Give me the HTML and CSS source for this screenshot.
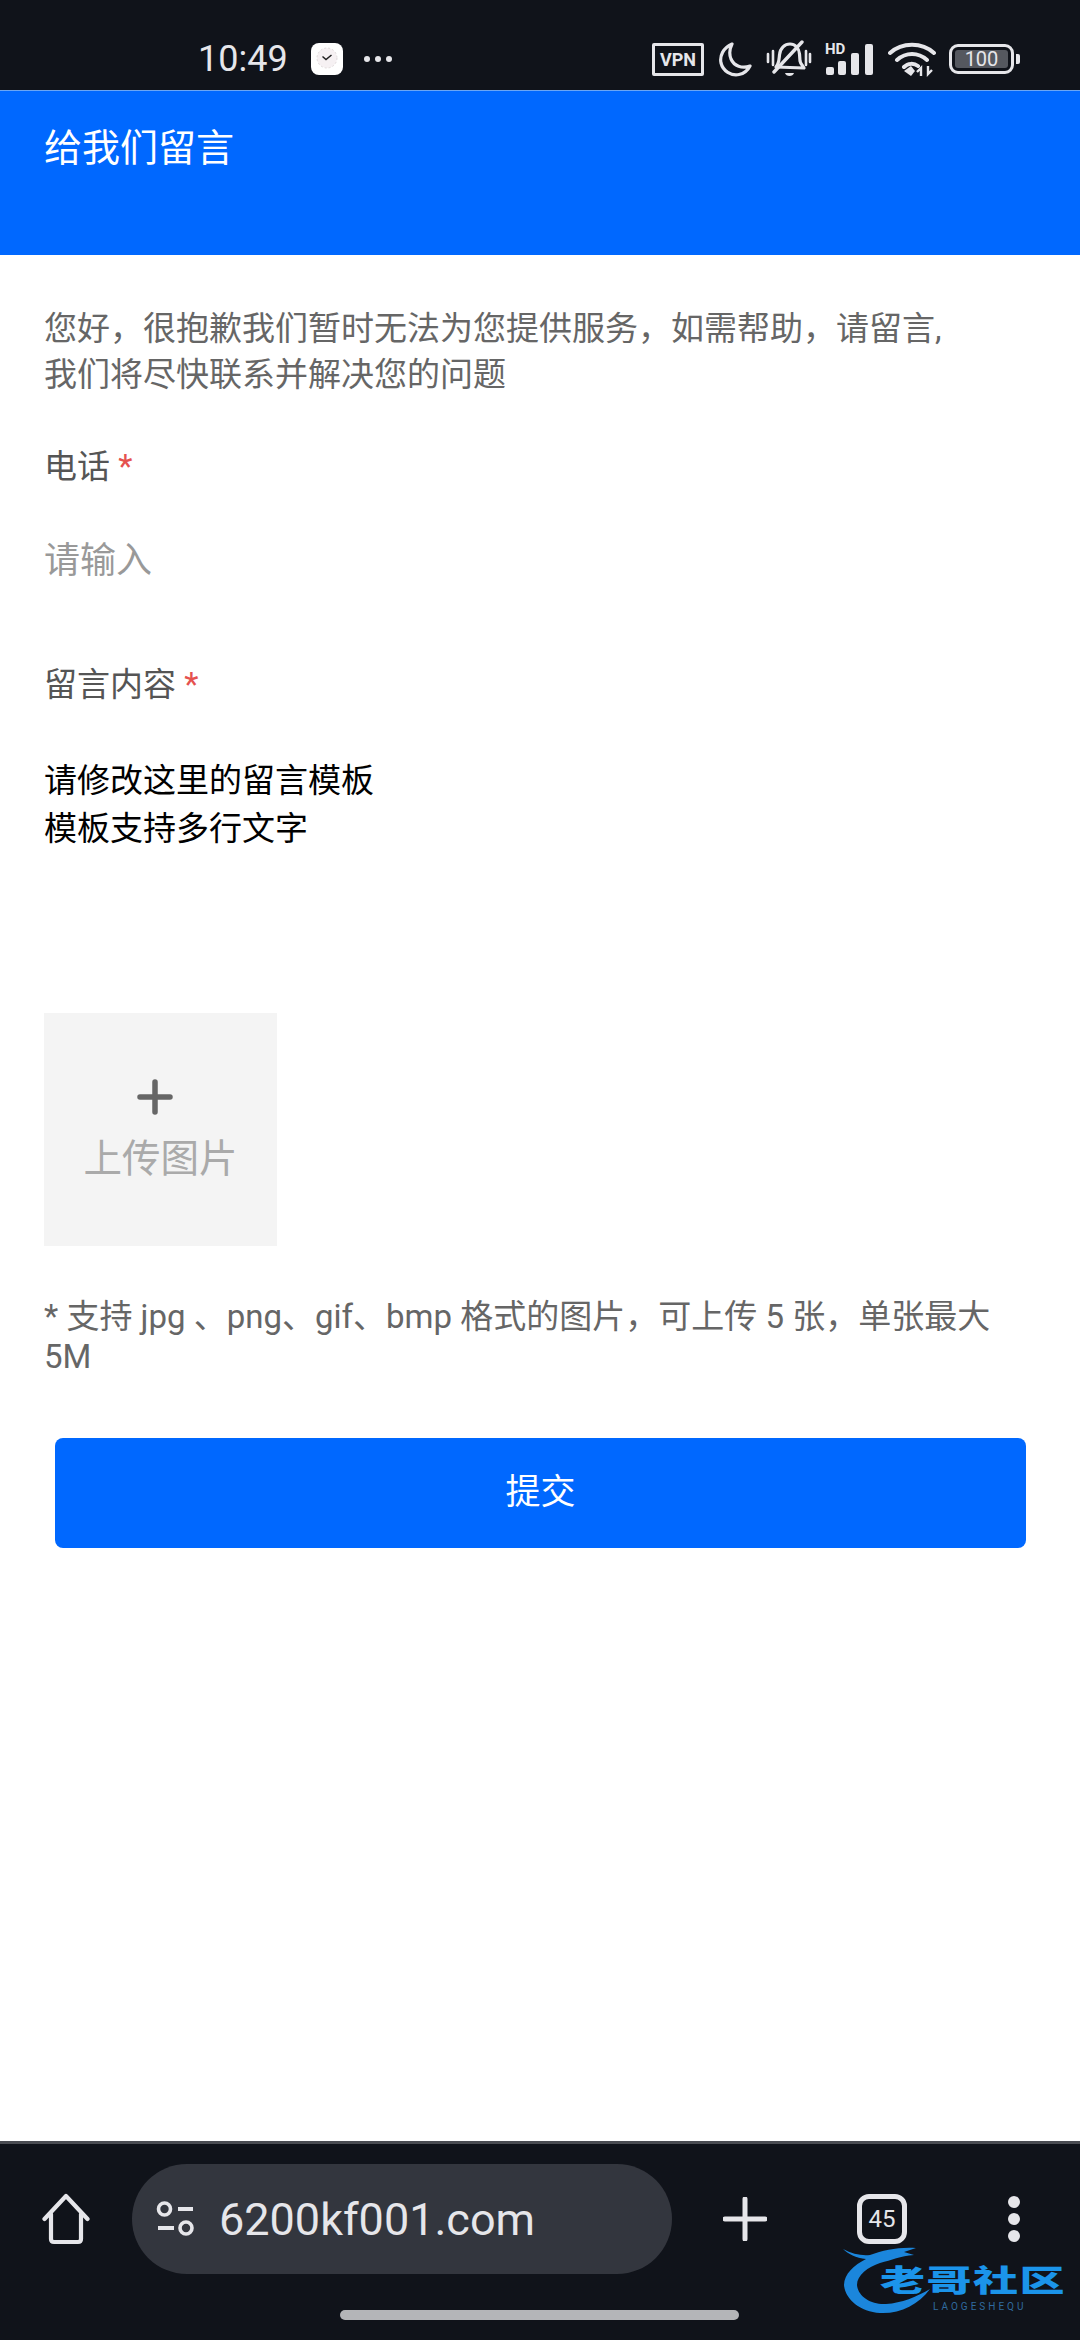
FILE: index.html
```html
<!DOCTYPE html>
<html lang="zh-CN">

<head>
    <meta charset="UTF-8">
    <title>给我们留言</title>
    <link rel="stylesheet" href="styles.css">
</head>

<body>
    <div class="phone">
        <!-- status bar -->
        <div class="status-bar">
            <div class="status-left">
                <span class="time">10:49</span>
                <svg class="clock-app" width="32" height="32" viewBox="0 0 32 32">
                    <rect width="32" height="32" rx="8" fill="#fff" />
                    <circle cx="16" cy="15" r="10" fill="#f6f1f3" stroke="#d8d0d2" stroke-width="0.8" stroke-dasharray="2 2" />
                    <path d="M11.5 13.5 L15 16.5 L20.5 12" fill="none" stroke="#222" stroke-width="1.5" />
                </svg>
                <svg class="more-dots" width="30" height="8" viewBox="0 0 30 8">
                    <circle cx="4" cy="4" r="3" fill="#e6e6ea" />
                    <circle cx="15" cy="4" r="3" fill="#e6e6ea" />
                    <circle cx="26" cy="4" r="3" fill="#e6e6ea" />
                </svg>
            </div>
            <div class="status-right">
                <span class="vpn">VPN</span>
                <svg width="36" height="36" viewBox="0 0 36 36">
                    <path d="M15 3 C6 7 2.500 15 4 22 C6 30 14 35 22 33.500 C27 32.500 31 29 33 25 C25 28 17 25 14 18 C12 13 12.500 8 15 3 Z" fill="none" stroke="#e6e6ea" stroke-width="3.200" stroke-linejoin="round" />
                </svg>
                <svg width="46" height="38" viewBox="0 0 46 38">
                    <path d="M10 27 C13 24 13 20 13.500 15 C14 8 19 4 24 4 C29 4 33 8 33.500 14 L34 21 C34.500 24 37 26 38 28 Z" fill="none" stroke="#e6e6ea" stroke-width="3.200" stroke-linejoin="round" />
                    <path d="M19 33 H28 C27 37 20 37 19 33 Z" fill="#e6e6ea" />
                    <path d="M8 32 L36 2" stroke="#e6e6ea" stroke-width="3.400" stroke-linecap="round" />
                    <path d="M2 14 V22 M7 11 V25 M40 11 V25 M44 14 V22" stroke="#e6e6ea" stroke-width="2.600" stroke-linecap="round" />
                </svg>
                <div class="signal">
                    <span class="hd">HD</span>
                    <svg width="50" height="32" viewBox="0 0 50 32">
                        <rect x="1" y="24" width="8" height="8" rx="2" fill="#e6e6ea" />
                        <rect x="13" y="18" width="8" height="14" rx="2" fill="#e6e6ea" />
                        <rect x="26" y="10" width="8" height="22" rx="2" fill="#e6e6ea" />
                        <rect x="40" y="1" width="8" height="31" rx="2" fill="#e6e6ea" />
                    </svg>
                </div>
                <svg width="48" height="36" viewBox="0 0 48 36">
                    <path d="M2 12 C14 1 34 1 46 12 M9 19 C18 11 30 11 39 19 M16 26 C20 22 26 22 30 25" fill="none" stroke="#e6e6ea" stroke-width="4" stroke-linecap="round" />
                    <path d="M16 30 L23 25 L27 30 L23 35 Z" fill="#e6e6ea" />
                    <path d="M33 35 V27 L29 31 M40 25 V33 L44 29" fill="none" stroke="#e6e6ea" stroke-width="2.400" />
                </svg>
                <div class="battery">
                    <div class="battery-body"><span class="battery-level">100</span></div>
                    <span class="battery-tip"></span>
                </div>
            </div>
        </div>

        <!-- page header -->
        <div class="page-header">给我们留言</div>

        <!-- form -->
        <div class="content">
            <p class="intro">您好，很抱歉我们暂时无法为您提供服务，如需帮助，请留言,<br>我们将尽快联系并解决您的问题</p>

            <div class="label">电话 <span class="required">*</span></div>
            <div class="input-field">请输入</div>

            <div class="label">留言内容 <span class="required">*</span></div>
            <div class="textarea-field">请修改这里的留言模板<br>模板支持多行文字</div>

            <div class="upload-box">
                <svg class="upload-plus" width="36" height="36" viewBox="0 0 36 36">
                    <path d="M18 3 V33 M3 18 H33" stroke="#666" stroke-width="5.500" stroke-linecap="round" />
                </svg>
                <span class="upload-text">上传图片</span>
            </div>

            <p class="note">* 支持 jpg 、png、gif、bmp 格式的图片，可上传 5 张，单张最大 5M</p>

            <div class="submit-btn">提交</div>
        </div>

        <!-- browser toolbar -->
        <div class="toolbar">
            <div class="toolbar-row">
                <svg class="home-icon" width="48" height="52" viewBox="0 0 48 52">
                    <path d="M2.500 26 L24 3 L45.500 26 M9 21 V46 C9 48 10 49 12 49 H36 C38 49 39 48 39 46 V21" fill="none" stroke="#e6e6ea" stroke-width="4.200" stroke-linecap="round" stroke-linejoin="round" />
                </svg>
                <div class="url-pill">
                    <svg width="40" height="36" viewBox="0 0 40 36">
                        <circle cx="8.500" cy="8" r="6" fill="none" stroke="#e6e6ea" stroke-width="3.600" />
                        <path d="M22 8 H37 M2 27 H18" stroke="#e6e6ea" stroke-width="3.800" />
                        <circle cx="30" cy="27" r="6" fill="none" stroke="#e6e6ea" stroke-width="3.600" />
                    </svg>
                    <span class="url">6200kf001.com</span>
                </div>
                <svg class="plus-icon" width="44" height="44" viewBox="0 0 44 44">
                    <path d="M22 2 V42 M2 22 H42" stroke="#e6e6ea" stroke-width="5" stroke-linecap="round" />
                </svg>
                <div class="tab-count">45</div>
                <div class="menu-dots"><span></span><span></span><span></span></div>
            </div>
            <div class="home-indicator"></div>

            <!-- watermark -->
            <div class="watermark">
                <svg class="dragon" width="90" height="68" viewBox="0 0 90 68">
                    <path d="M1 2 C10 7 20 9 28 8 C42 3 56 0 74 1 L62 5 L72 8 C58 9 50 13 38 16 C26 20 15 28 15 38 C16 50 30 58 44 57 C60 56 74 50 88 42 C76 58 58 67 38 66 C18 65 3 52 2 38 C2 27 12 18 24 12 C14 11 6 7 1 2 Z" fill="#1b86dc" />
                </svg>
                <div class="watermark-text">
                    <span class="watermark-cn">老哥社区</span>
                    <span class="watermark-en">LAOGESHEQU</span>
                </div>
            </div>
        </div>
    </div>
</body>

</html>
```

FILE: styles.css
```css
* {
    box-sizing: border-box;
}

body {
    margin: 0;
    background: #fff;
    font-family: Roboto, "Noto Sans CJK SC", sans-serif;
}

.phone {
    width: 1080px;
    height: 2340px;
    display: flex;
    flex-direction: column;
    overflow: hidden;
}

/* status bar */
.status-bar {
    height: 91px;
    flex-shrink: 0;
    background: #10131a;
    border-bottom: 1px solid #6aa6f5;
    display: flex;
    justify-content: space-between;
    align-items: center;
    padding: 28px 60px 0 198px;
    color: #e6e6ea;
}

.status-left {
    display: flex;
    align-items: center;
}

.time {
    font-size: 36px;
    width: 113px;
}

.clock-app {
    margin-right: 20px;
}

.status-right {
    display: flex;
    align-items: center;
    gap: 13px;
}

.vpn {
    width: 52px;
    height: 33px;
    border: 3px solid #e6e6ea;
    border-radius: 2px;
    font-size: 18px;
    font-weight: 700;
    line-height: 27px;
    text-align: center;
}

.signal {
    position: relative;
    width: 50px;
    height: 32px;
}

.hd {
    position: absolute;
    left: 0;
    top: -1px;
    font-size: 15px;
    font-weight: 700;
    line-height: 15px;
}

.signal svg {
    display: block;
}

.battery {
    display: flex;
    align-items: center;
    gap: 2px;
}

.battery-body {
    width: 65px;
    height: 30px;
    border: 3px solid #e6e6ea;
    border-radius: 9px;
    padding: 3px;
}

.battery-level {
    display: block;
    height: 18px;
    background: #55585f;
    border-radius: 3px;
    font-size: 20px;
    line-height: 18px;
    text-align: center;
}

.battery-tip {
    width: 4px;
    height: 10px;
    background: #e6e6ea;
    border-radius: 0 2px 2px 0;
}

/* page header */
.page-header {
    height: 164px;
    flex-shrink: 0;
    background: #0068ff;
    color: #fff;
    font-size: 38px;
    line-height: 46px;
    padding: 34px 44px 0;
}

/* form */
.content {
    flex: 1;
    padding: 51px 44px 0;
}

.intro {
    margin: 0 0 46px;
    font-size: 33px;
    line-height: 46px;
    color: #666;
    white-space: nowrap;
}

.label {
    font-size: 33px;
    line-height: 46px;
    color: #555;
}

.required {
    color: #e5524f;
}

.input-field {
    height: 172px;
    padding-top: 48px;
    font-size: 36px;
    line-height: 46px;
    color: #999;
}

.textarea-field {
    height: 305px;
    padding-top: 49px;
    font-size: 33px;
    line-height: 48px;
    color: #000;
}

.upload-box {
    width: 233px;
    height: 233px;
    background: #f4f4f4;
    display: flex;
    flex-direction: column;
    align-items: center;
    padding-top: 66px;
}

.upload-plus {
    margin-right: 12px;
}

.upload-text {
    margin-top: 22px;
    font-size: 38.500px;
    line-height: 44px;
    color: #aaa;
}

.note {
    margin: 51px 0 61px;
    font-size: 33px;
    line-height: 40px;
    color: #666;
}

.submit-btn {
    width: 971px;
    height: 110px;
    margin-left: 11px;
    background: #0068ff;
    border-radius: 8px;
    color: #fff;
    font-size: 35px;
    line-height: 110px;
    text-align: center;
}

/* browser toolbar */
.toolbar {
    position: relative;
    height: 199px;
    flex-shrink: 0;
    background: #10131a;
    border-top: 3px solid #4a4c52;
    padding-top: 20px;
}

.toolbar-row {
    display: flex;
    align-items: center;
    height: 110px;
    padding-left: 42px;
}

.url-pill {
    width: 540px;
    height: 110px;
    margin-left: 42px;
    background: #33363e;
    border-radius: 55px;
    display: flex;
    align-items: center;
    padding-left: 24px;
    gap: 23px;
    color: #e6e6ea;
}

.url {
    font-size: 45px;
}

.plus-icon {
    margin-left: 51px;
}

.tab-count {
    width: 50px;
    height: 50px;
    margin-left: 90px;
    border: 5px solid #e6e6ea;
    border-radius: 12px;
    color: #e6e6ea;
    font-size: 24px;
    line-height: 40px;
    text-align: center;
}

.menu-dots {
    display: flex;
    flex-direction: column;
    gap: 5px;
    margin-left: 101px;
}

.menu-dots span {
    width: 12px;
    height: 12px;
    border-radius: 50%;
    background: #e6e6ea;
}

.home-indicator {
    width: 399px;
    height: 10px;
    margin: 36px 0 0 340px;
    border-radius: 5px;
    background: #b4b5b8;
}

.watermark {
    position: absolute;
    left: 842px;
    top: 103px;
    width: 222px;
    height: 68px;
}

.dragon {
    position: absolute;
    left: 0;
    top: 0;
}

.watermark-text {
    position: absolute;
    left: 38px;
    top: 18px;
    display: flex;
    flex-direction: column;
}

.watermark-cn {
    font-size: 30px;
    font-weight: 900;
    line-height: 32px;
    letter-spacing: 1px;
    color: #1b94ea;
    white-space: nowrap;
    transform: scaleX(1.5);
    transform-origin: left center;
}

.watermark-en {
    margin: 4px 0 0 53px;
    font-size: 10px;
    line-height: 12px;
    letter-spacing: 3px;
    color: #2f6a9e;
}
```
